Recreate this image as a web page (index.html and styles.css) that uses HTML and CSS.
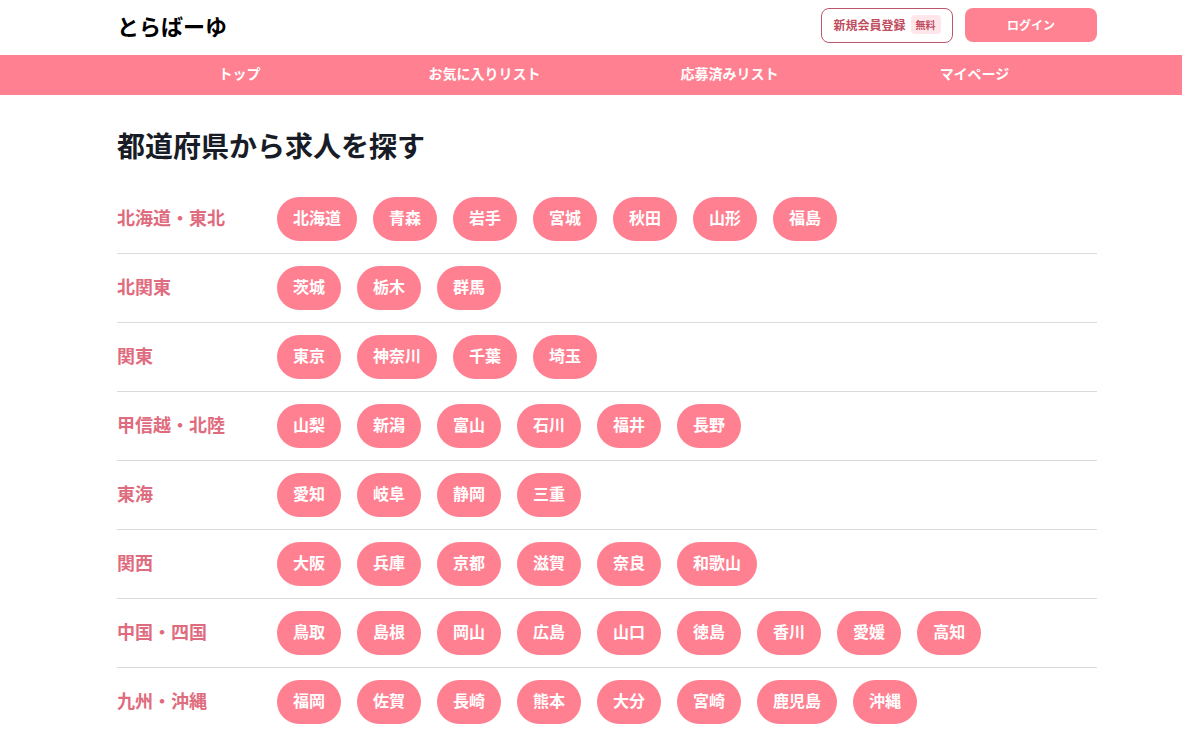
FILE: index.html
```html
<!DOCTYPE html>
<html lang="ja">
<head>
  <meta charset="UTF-8">
  <meta name="viewport" content="width=device-width, initial-scale=1">
  <title>とらばーゆ</title>
  <link rel="stylesheet" href="styles.css">
</head>
<body>
  <header class="header">
    <div class="container header-inner">
      <a class="logo" href="#">とらばーゆ</a>
      <div class="header-buttons">
        <button type="button" class="btn btn-register">新規会員登録<span class="badge">無料</span></button>
        <button type="button" class="btn btn-login">ログイン</button>
      </div>
    </div>
  </header>

  <nav class="nav">
    <ul class="container nav-list">
      <li><a href="#">トップ</a></li>
      <li><a href="#">お気に入りリスト</a></li>
      <li><a href="#">応募済みリスト</a></li>
      <li><a href="#">マイページ</a></li>
    </ul>
  </nav>

  <main class="container main">
    <h1>都道府県から求人を探す</h1>

    <section class="area">
      <h2>北海道・東北</h2>
      <div class="prefs">
        <a href="#">北海道</a>
        <a href="#">青森</a>
        <a href="#">岩手</a>
        <a href="#">宮城</a>
        <a href="#">秋田</a>
        <a href="#">山形</a>
        <a href="#">福島</a>
      </div>
    </section>

    <section class="area">
      <h2>北関東</h2>
      <div class="prefs">
        <a href="#">茨城</a>
        <a href="#">栃木</a>
        <a href="#">群馬</a>
      </div>
    </section>

    <section class="area">
      <h2>関東</h2>
      <div class="prefs">
        <a href="#">東京</a>
        <a href="#">神奈川</a>
        <a href="#">千葉</a>
        <a href="#">埼玉</a>
      </div>
    </section>

    <section class="area">
      <h2>甲信越・北陸</h2>
      <div class="prefs">
        <a href="#">山梨</a>
        <a href="#">新潟</a>
        <a href="#">富山</a>
        <a href="#">石川</a>
        <a href="#">福井</a>
        <a href="#">長野</a>
      </div>
    </section>

    <section class="area">
      <h2>東海</h2>
      <div class="prefs">
        <a href="#">愛知</a>
        <a href="#">岐阜</a>
        <a href="#">静岡</a>
        <a href="#">三重</a>
      </div>
    </section>

    <section class="area">
      <h2>関西</h2>
      <div class="prefs">
        <a href="#">大阪</a>
        <a href="#">兵庫</a>
        <a href="#">京都</a>
        <a href="#">滋賀</a>
        <a href="#">奈良</a>
        <a href="#">和歌山</a>
      </div>
    </section>

    <section class="area">
      <h2>中国・四国</h2>
      <div class="prefs">
        <a href="#">鳥取</a>
        <a href="#">島根</a>
        <a href="#">岡山</a>
        <a href="#">広島</a>
        <a href="#">山口</a>
        <a href="#">徳島</a>
        <a href="#">香川</a>
        <a href="#">愛媛</a>
        <a href="#">高知</a>
      </div>
    </section>

    <section class="area">
      <h2>九州・沖縄</h2>
      <div class="prefs">
        <a href="#">福岡</a>
        <a href="#">佐賀</a>
        <a href="#">長崎</a>
        <a href="#">熊本</a>
        <a href="#">大分</a>
        <a href="#">宮崎</a>
        <a href="#">鹿児島</a>
        <a href="#">沖縄</a>
      </div>
    </section>
  </main>
</body>
</html>
```
FILE: styles.css
```css
* {
  box-sizing: border-box;
}
body {
  margin: 0;
  background: #fff;
  color: #171c26;
  font-family: "Noto Sans CJK JP", sans-serif;
}
a {
  text-decoration: none;
}
.container {
  max-width: 1012px;
  margin: 0 auto;
  padding-left: 32px;
}

/* Header */
.header-inner {
  display: flex;
  justify-content: space-between;
  align-items: flex-start;
  padding-top: 8px;
  padding-bottom: 12px;
}
.logo {
  color: #000;
  font-size: 22px;
  font-weight: bold;
  line-height: 35px;
}
.header-buttons {
  display: flex;
  align-items: flex-start;
  gap: 12px;
}
.btn {
  display: flex;
  justify-content: center;
  align-items: center;
  width: 132px;
  height: 34px;
  padding: 0 0 2px;
  border: 0;
  border-radius: 8px;
  font-family: inherit;
  font-size: 12px;
  font-weight: bold;
  cursor: pointer;
}
.btn-register {
  gap: 5px;
  height: 35px;
  border: 1px solid #b9586b;
  background: #fff;
  color: #c04d60;
}
.btn-login {
  background: #ff8293;
  color: #fff;
}
.badge {
  padding: 0 5px;
  border-radius: 4px;
  background: #ffe6ea;
  font-size: 10px;
  line-height: 19px;
}

/* Navigation */
.nav {
  background: #ff8090;
}
.nav-list {
  display: grid;
  grid-template-columns: repeat(4, 1fr);
  list-style: none;
}
.nav-list a {
  display: block;
  padding-bottom: 4px;
  color: #fff;
  font-size: 14px;
  font-weight: bold;
  line-height: 36px;
  text-align: center;
}

/* Prefectures */
.main {
  padding-top: 32px;
}
h1 {
  margin: 0 0 22px;
  font-size: 28px;
  line-height: 36px;
}
.area {
  display: grid;
  grid-template-columns: 160px 1fr;
  align-items: center;
  padding: 12px 0;
  border-bottom: 1px solid #d9dcde;
}
.area:last-child {
  border-bottom: 0;
}
.area h2 {
  margin: 0;
  padding-bottom: 4px;
  color: #df6c7e;
  font-size: 18px;
  line-height: 26px;
}
.prefs {
  display: flex;
  flex-wrap: wrap;
  gap: 16px;
}
.prefs a {
  padding: 8px 16px 12px;
  border-radius: 24px;
  background: #ff8090;
  color: #fff;
  font-size: 16px;
  font-weight: bold;
  line-height: 24px;
}
```
